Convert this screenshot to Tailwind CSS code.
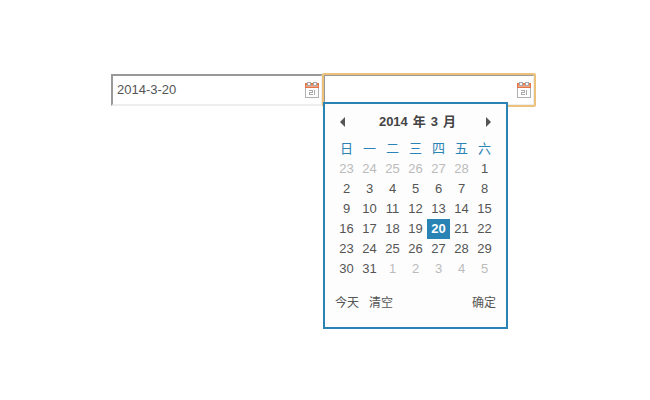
<!DOCTYPE html>
<html lang="zh-CN">
  <head>
    <meta charset="UTF-8" />
    <meta name="viewport" content="width=device-width, initial-scale=1.0" />
    <title>日期选择</title>
    <script src="https://cdn.jsdelivr.net/npm/@tailwindcss/browser@4"></script>
  </head>
  <body
    class="min-h-screen bg-white pt-[74px] pr-5 pl-4 font-['Liberation_Sans','Noto_Sans_CJK_SC',sans-serif] text-[13px] leading-5 text-[#555]"
  >
    <!-- Calendar icon shared by both fields -->
    <svg class="hidden" aria-hidden="true">
      <symbol id="calendar-icon" viewBox="0 0 14 16" shape-rendering="crispEdges">
        <rect x="0" y="1" width="14" height="15" fill="#b0b0b0" />
        <rect x="1" y="6" width="12" height="9" fill="#fff" />
        <rect x="0" y="1" width="14" height="5" fill="#e2754a" />
        <rect x="1" y="3" width="12" height="2" fill="#f0a583" />
        <path d="M2 0h4v4h-4zM8 0h4v4h-4z" fill="#aaa" />
        <path d="M3 1h2v2h-2zM9 1h2v2h-2z" fill="#f5f5f5" />
        <path
          d="M4 8h4v3h-3v1h3v1h-4v-3h3v-1h-3zM9 8h1v5h-1z"
          fill="#aaa"
        />
      </symbol>
    </svg>

    <main class="mx-auto flex max-w-[424px]">
      <div class="relative flex-1">
        <input
          id="start-date"
          type="text"
          aria-label="开始日期"
          value="2014-3-20"
          class="block h-8 w-full border-2 border-t-[#999] border-r-[#eee] border-b-[#eee] border-l-[#999] bg-white pr-6 pb-px pl-1 outline-none"
        />
        <svg class="pointer-events-none absolute top-2 right-1 h-4 w-3.5">
          <use href="#calendar-icon" />
        </svg>
      </div>

      <div class="relative flex-1">
        <input
          id="end-date"
          type="text"
          aria-label="结束日期"
          class="block h-8 w-full rounded-[1px] border-2 border-t-[#999] border-r-[#eee] border-b-[#eee] border-l-[#999] bg-white pr-6 pb-px pl-1 outline-2 -outline-offset-1 outline-[#ecc179]"
        />
        <svg class="pointer-events-none absolute top-2 right-1 h-4 w-3.5">
          <use href="#calendar-icon" />
        </svg>

        <!-- Date picker popup -->
        <section
          class="absolute top-7 left-0 border-2 border-[#2a83b5] bg-[#fdfdfd] px-2.5 pt-2 pb-3.5"
        >
          <header class="flex h-5 items-center justify-between px-[5px] font-bold text-[#444]">
            <button type="button" aria-label="上个月">
              <svg class="h-2.5 w-[5px] fill-[#555]" viewBox="0 0 5 10">
                <path d="M5 0v10L0 5z" />
              </svg>
            </button>
            <h2 class="flex gap-[5px] pl-1">
              <span>2014</span><span>年</span><span>3</span><span>月</span>
            </h2>
            <button type="button" aria-label="下个月">
              <svg class="h-2.5 w-[5px] fill-[#555]" viewBox="0 0 5 10">
                <path d="M0 0v10l5-5z" />
              </svg>
            </button>
          </header>

          <table class="mt-[7px] w-[161px] table-fixed text-center">
            <thead class="text-[#2a83b5]">
              <tr class="h-5 *:font-normal">
                <th>日</th>
                <th>一</th>
                <th>二</th>
                <th>三</th>
                <th>四</th>
                <th>五</th>
                <th>六</th>
              </tr>
            </thead>
            <tbody id="calendar-days"></tbody>
          </table>

          <footer class="mt-3.5 flex text-xs leading-5">
            <button type="button">今天</button>
            <button type="button" class="ml-2.5">清空</button>
            <button type="button" class="ml-auto">确定</button>
          </footer>
        </section>
      </div>
    </main>

    <script>
      const year = 2014;
      const month = 2;
      const selectedDay = 20;

      const calendarDays = document.getElementById("calendar-days");
      const offset = new Date(year, month, 1).getDay();

      for (let week = 0; week < 6; week++) {
        const row = document.createElement("tr");
        row.className = "h-5";
        for (let day = 0; day < 7; day++) {
          const date = new Date(year, month, 1 - offset + week * 7 + day);
          const cell = document.createElement("td");
          cell.textContent = date.getDate();
          if (date.getMonth() !== month) {
            cell.className = "text-[#bbb]";
          } else if (date.getDate() === selectedDay) {
            cell.className = "bg-[#2a83b5] font-bold text-white";
          }
          row.appendChild(cell);
        }
        calendarDays.appendChild(row);
      }
    </script>
  </body>
</html>
